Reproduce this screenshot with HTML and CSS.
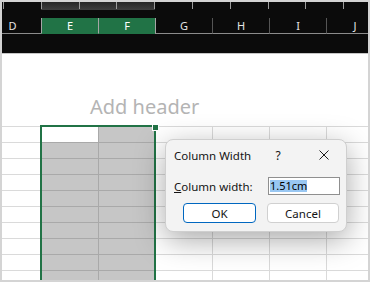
FILE: index.html
```html
<html>

<head>
    <link rel="stylesheet" href="styles.css">
</head>

<body>
    <div class="window">
        <div class="ruler"></div>
        <div class="colHeads">
            <div class="colHead">D</div>
            <div class="colHead selected">E</div>
            <div class="colHead selected">F</div>
            <div class="colHead afterSel">G</div>
            <div class="colHead">H</div>
            <div class="colHead">I</div>
            <div class="colHead">J</div>
        </div>
        <div class="sheet">
            <div class="pageHeader">Add header</div>
            <div class="cells">
                <div class="selection">
                    <div class="activeCell"></div>
                    <div class="fillHandle"></div>
                </div>
            </div>
        </div>
        <div class="dialog">
            <div class="titleBar">
                <span class="title">Column Width</span>
                <span class="help">?</span>
                <span class="close">
                    <svg width="10" height="10" viewBox="0 0 10 10">
                        <path d="M0.5 0.5 L9.5 9.5 M9.5 0.5 L0.5 9.5" stroke="#1b1b1b" stroke-width="1" fill="none"/>
                    </svg>
                </span>
            </div>
            <div class="fieldRow">
                <span class="fieldLabel"><u>C</u>olumn width:</span>
                <div class="textBox"><span class="selText">1.51cm</span></div>
            </div>
            <div class="buttonRow">
                <button class="btn okBtn">OK</button>
                <button class="btn cancelBtn">Cancel</button>
            </div>
        </div>
    </div>
</body>

</html>
```

FILE: styles.css
```css
body {
    margin: 0;
    font-family: "Noto Sans", "Liberation Sans", sans-serif;
}

.window {
    position: relative;
    width: 370px;
    height: 282px;
    box-sizing: border-box;
    border: 2px solid #d4d4d4;
    background: #0b0b0b;
    overflow: hidden;
}

.ruler {
    height: 8px;
    background:
        repeating-linear-gradient(to right, #9c9c9c 0 1px, transparent 1px 37.8px) 1px 0 / calc(100% - 1px) 7px no-repeat,
        linear-gradient(#262626, #3e3e3e) 39px 0 / 114px 100% no-repeat;
}

.colHeads {
    display: flex;
    margin: 8px 0 0 -18px;
    height: 16px;
}

.colHead {
    flex: 0 0 57px;
    box-sizing: border-box;
    border-left: 1px solid #555;
    border-bottom: 1px solid #8c8c8c;
    color: #e4e4e4;
    font-size: 11px;
    line-height: 15px;
    text-align: center;
}

.colHead:first-child {
    border-left: none;
}

.colHead.selected {
    background: #217346;
    border-left-color: #a5a5a5;
    border-bottom-color: #217346;
    color: #fff;
}

.colHead.afterSel {
    border-left-color: #a5a5a5;
}

.sheet {
    margin-top: 19px;
    border-top: 1px solid #c6c6c6;
    background: #fff;
    height: 226px;
}

.pageHeader {
    height: 72px;
    box-sizing: border-box;
    padding: 43px 0 0 88px;
    font-size: 20px;
    line-height: 20px;
    color: #b4b4b4;
}

.cells {
    position: relative;
    height: 154px;
    background:
        repeating-linear-gradient(to bottom, #dadada 0 1px, transparent 1px 16px),
        repeating-linear-gradient(to right, transparent 0 39px, #dadada 39px 40px, transparent 40px 57px);
}

.selection {
    position: absolute;
    left: 38px;
    top: -1px;
    width: 116px;
    height: 170px;
    box-sizing: border-box;
    border: 2px solid #217346;
    background:
        repeating-linear-gradient(to bottom, transparent 0 15px, #a9a9a9 15px 16px),
        linear-gradient(to right, transparent 56px, #a9a9a9 56px 57px, transparent 57px),
        #c6c6c6;
}

.activeCell {
    width: 56px;
    height: 15px;
    background: #fff;
}

.fillHandle {
    position: absolute;
    left: 111px;
    top: -2px;
    width: 5px;
    height: 5px;
    background: #217346;
    box-shadow: 0 0 0 1px #fff;
}

.dialog {
    position: absolute;
    left: 163px;
    top: 137px;
    width: 182px;
    height: 93px;
    box-sizing: border-box;
    border: 1px solid #cfcfcf;
    border-radius: 8px;
    background: #f3f3f3;
    box-shadow: 0 8px 30px rgba(0, 0, 0, 0.34);
    color: #141414;
    font-size: 11.5px;
}

.titleBar {
    display: flex;
    align-items: center;
    height: 30px;
    padding-left: 8px;
}

.title {
    flex: 1;
}

.help {
    width: 20px;
    margin-right: 13px;
    text-align: center;
    font-size: 12px;
}

.close {
    width: 45px;
    display: flex;
    justify-content: center;
}

.fieldRow {
    display: flex;
    align-items: center;
    height: 18px;
    margin-top: 7px;
    padding: 0 6px 0 8px;
}

.fieldLabel {
    flex: 1;
}

.textBox {
    width: 72px;
    height: 18px;
    box-sizing: border-box;
    border: 1px solid #8f8f8f;
    background: #fff;
    padding-left: 1px;
    display: flex;
    align-items: center;
}

.selText {
    display: inline-block;
    line-height: 12px;
    font-size: 11px;
    background: #99c7f2;
    color: #000;
}

.buttonRow {
    display: flex;
    gap: 11px;
    margin-top: 8px;
    padding-left: 17px;
}

.btn {
    height: 20px;
    padding: 0;
    border: 1px solid #d0d0d0;
    border-radius: 4px;
    background: #fff;
    color: #141414;
    font-family: inherit;
    font-size: 11.5px;
}

.okBtn {
    width: 73px;
    border-color: #0067c0;
}

.cancelBtn {
    width: 72px;
}
```
